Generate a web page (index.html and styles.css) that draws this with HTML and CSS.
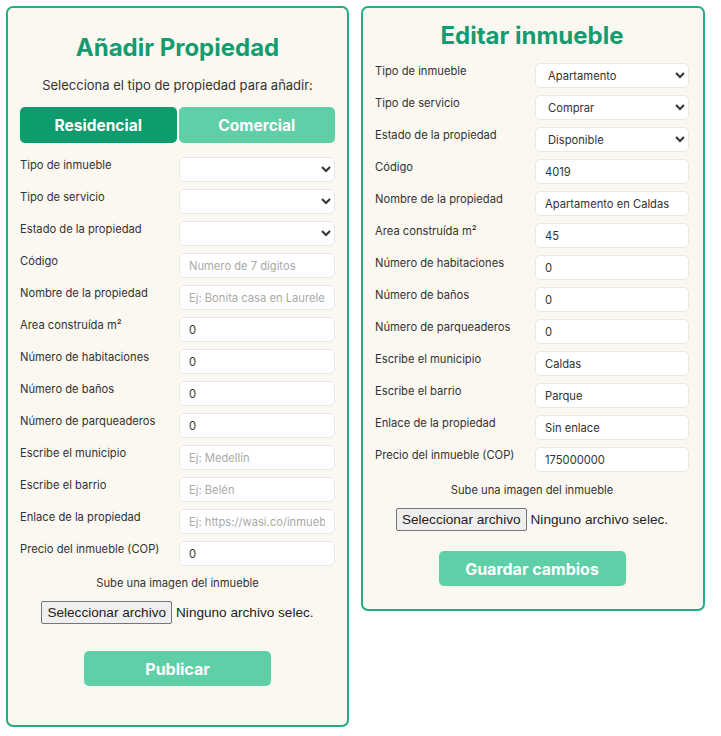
FILE: index.html
```html
<!DOCTYPE html>
<html lang="es">
<head>
<meta charset="utf-8">
<title>Propiedades</title>
<link rel="stylesheet" href="styles.css">
</head>
<body>
<div class="page">
  <section class="card card-add">
    <h1 class="title">Añadir Propiedad</h1>
    <p class="subtitle">Selecciona el tipo de propiedad para añadir:</p>
    <div class="tabs">
      <button class="tab tab-active">Residencial</button>
      <button class="tab">Comercial</button>
    </div>
    <form class="fields">
      <label class="lbl">Tipo de inmueble</label>
      <select class="ctl sel"><option></option></select>
      <label class="lbl">Tipo de servicio</label>
      <select class="ctl sel"><option></option></select>
      <label class="lbl">Estado de la propiedad</label>
      <select class="ctl sel"><option></option></select>
      <label class="lbl">Código</label>
      <input class="ctl" type="text" placeholder="Numero de 7 dígitos">
      <label class="lbl">Nombre de la propiedad</label>
      <input class="ctl" type="text" placeholder="Ej: Bonita casa en Laureles">
      <label class="lbl">Area construída m²</label>
      <input class="ctl" type="text" value="0">
      <label class="lbl">Número de habitaciones</label>
      <input class="ctl" type="text" value="0">
      <label class="lbl">Número de baños</label>
      <input class="ctl" type="text" value="0">
      <label class="lbl">Número de parqueaderos</label>
      <input class="ctl" type="text" value="0">
      <label class="lbl">Escribe el municipio</label>
      <input class="ctl" type="text" placeholder="Ej: Medellín">
      <label class="lbl">Escribe el barrio</label>
      <input class="ctl" type="text" placeholder="Ej: Belén">
      <label class="lbl">Enlace de la propiedad</label>
      <input class="ctl" type="text" placeholder="Ej: https://wasi.co/inmueble">
      <label class="lbl">Precio del inmueble (COP)</label>
      <input class="ctl" type="text" value="0">
    </form>
    <p class="upload">Sube una imagen del inmueble</p>
    <div class="file"><span class="file-btn">Seleccionar archivo</span><span class="file-name">Ninguno archivo selec.</span></div>
    <button class="submit submit-add">Publicar</button>
  </section>

  <section class="card card-edit">
    <h1 class="title">Editar inmueble</h1>
    <form class="fields fields-edit">
      <label class="lbl">Tipo de inmueble</label>
      <select class="ctl sel"><option>Apartamento</option></select>
      <label class="lbl">Tipo de servicio</label>
      <select class="ctl sel"><option>Comprar</option></select>
      <label class="lbl">Estado de la propiedad</label>
      <select class="ctl sel"><option>Disponible</option></select>
      <label class="lbl">Código</label>
      <input class="ctl" type="text" value="4019">
      <label class="lbl">Nombre de la propiedad</label>
      <input class="ctl" type="text" value="Apartamento en Caldas">
      <label class="lbl">Area construída m²</label>
      <input class="ctl" type="text" value="45">
      <label class="lbl">Número de habitaciones</label>
      <input class="ctl" type="text" value="0">
      <label class="lbl">Número de baños</label>
      <input class="ctl" type="text" value="0">
      <label class="lbl">Número de parqueaderos</label>
      <input class="ctl" type="text" value="0">
      <label class="lbl">Escribe el municipio</label>
      <input class="ctl" type="text" value="Caldas">
      <label class="lbl">Escribe el barrio</label>
      <input class="ctl" type="text" value="Parque">
      <label class="lbl">Enlace de la propiedad</label>
      <input class="ctl" type="text" value="Sin enlace">
      <label class="lbl">Precio del inmueble (COP)</label>
      <input class="ctl" type="text" value="175000000">
    </form>
    <p class="upload upload-edit">Sube una imagen del inmueble</p>
    <div class="file"><span class="file-btn">Seleccionar archivo</span><span class="file-name">Ninguno archivo selec.</span></div>
    <button class="submit submit-edit">Guardar cambios</button>
  </section>
</div>
</body>
</html>
```

FILE: styles.css
```css
* { box-sizing: border-box; }
html, body { background: #ffffff; }
body {
  margin: 6px;
  font-family: Inter, "Noto Sans", sans-serif;
  color: #333333;
}
.page {
  display: flex;
  align-items: flex-start;
  gap: 12px;
}
.card {
  width: 343px;
  background: #fbf8f1;
  border: 2px solid #24ad82;
  border-radius: 7px;
  display: flex;
  flex-direction: column;
  padding: 25px 12px 39px;
}
.card-edit {
  width: 344px;
  padding: 13px 14px 23px 12px;
}
.title {
  margin: 0;
  text-align: center;
  font-size: 24px;
  line-height: 30px;
  font-weight: 700;
  color: #149b6f;
}
.subtitle {
  margin: 13px 0 0;
  text-align: center;
  font-size: 13px;
  line-height: 18px;
  color: #333;
}
.tabs {
  margin-top: 13px;
  display: flex;
  gap: 2px;
}
.tab {
  flex: 1;
  height: 36px;
  border: none;
  border-radius: 5px;
  background: #5fcfa7;
  color: #ffffff;
  font-family: Inter, "Noto Sans", sans-serif;
  font-size: 15.5px;
  font-weight: 700;
  padding: 0;
}
.tab-active { background: #0e9b6d; }
.fields {
  margin-top: 14px;
  display: grid;
  grid-template-columns: 1fr 156px;
  row-gap: 7px;
}
.fields-edit {
  margin-top: 12px;
  grid-template-columns: 1fr 154px;
}
.lbl {
  font-size: 11.2px;
  line-height: 15px;
  color: #333;
  padding-top: 1px;
}
.ctl {
  height: 25px;
  width: 100%;
  margin: 0;
  border: 1px solid #e8e8e8;
  border-radius: 5px;
  background: #ffffff;
  font-family: Inter, "Noto Sans", sans-serif;
  font-size: 11.2px;
  color: #333;
  padding: 0 9px;
  outline: none;
}
.ctl::placeholder { color: #a9a9a9; }
.sel { padding: 0 4px 0 8px; }
.upload {
  margin: 9px 0 0;
  text-align: center;
  font-size: 11.2px;
  line-height: 16px;
  color: #333;
}
.upload-edit { margin-top: 10px; }
.file {
  margin-top: 10px;
  display: flex;
  justify-content: center;
  align-items: center;
  font-family: "Liberation Sans", Arial, sans-serif;
  font-size: 13.6px;
  color: #222;
}
.file-btn {
  height: 23px;
  line-height: 21px;
  padding: 0 5px;
  background: #efefef;
  border: 1px solid #767676;
  border-radius: 2px;
  color: #222;
}
.file-name { margin-left: 4px; }
.submit {
  align-self: center;
  width: 187px;
  height: 35px;
  border: none;
  border-radius: 5px;
  background: #5fcfa7;
  color: #ffffff;
  font-family: Inter, "Noto Sans", sans-serif;
  font-size: 16px;
  font-weight: 700;
}
.submit-add { margin-top: 27px; }
.submit-edit { margin-top: 20px; }
```
